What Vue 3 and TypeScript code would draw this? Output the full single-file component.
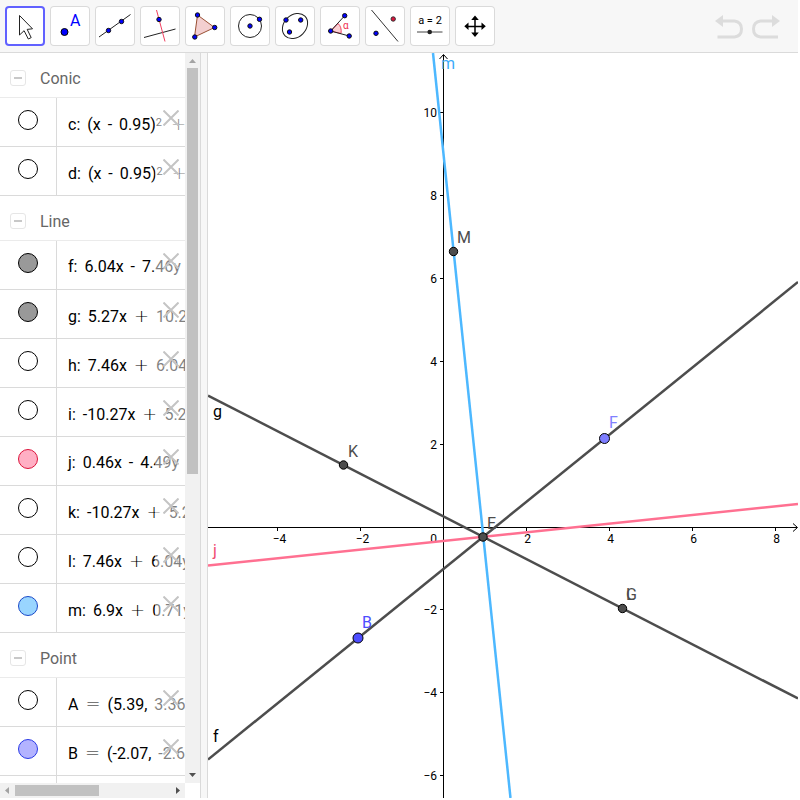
<script setup lang="ts">
import { computed, ref } from 'vue'

type Token = { text: string; op?: boolean; sup?: string }
interface Item {
  name: string
  tone: 'hidden' | 'grey' | 'pink' | 'blue' | 'violet'
  tokens: Token[]
}
interface Group {
  title: string
  items: Item[]
}

const t = (text: string, sup?: string): Token => ({ text, sup })
const op = (text: string): Token => ({ text, op: true })

const groups: Group[] = [
  {
    title: 'Conic',
    items: [
      { name: 'c', tone: 'hidden', tokens: [t('c:'), t('(x'), t('-'), t('0.95)', '2'), op('+')] },
      { name: 'd', tone: 'hidden', tokens: [t('d:'), t('(x'), t('-'), t('0.95)', '2'), op('+')] },
    ],
  },
  {
    title: 'Line',
    items: [
      { name: 'f', tone: 'grey', tokens: [t('f:'), t('6.04x'), t('-'), t('7.46y')] },
      { name: 'g', tone: 'grey', tokens: [t('g:'), t('5.27x'), op('+'), t('10.27y')] },
      { name: 'h', tone: 'hidden', tokens: [t('h:'), t('7.46x'), op('+'), t('6.04y')] },
      { name: 'i', tone: 'hidden', tokens: [t('i:'), t('-10.27x'), op('+'), t('5.27y')] },
      { name: 'j', tone: 'pink', tokens: [t('j:'), t('0.46x'), t('-'), t('4.49y')] },
      { name: 'k', tone: 'hidden', tokens: [t('k:'), t('-10.27x'), op('+'), t('5.27y')] },
      { name: 'l', tone: 'hidden', tokens: [t('l:'), t('7.46x'), op('+'), t('6.04y')] },
      { name: 'm', tone: 'blue', tokens: [t('m:'), t('6.9x'), op('+'), t('0.71y')] },
    ],
  },
  {
    title: 'Point',
    items: [
      { name: 'A', tone: 'hidden', tokens: [t('A'), op('='), t('(5.39,'), t('3.36)')] },
      { name: 'B', tone: 'violet', tokens: [t('B'), op('='), t('(-2.07,'), t('-2.67)')] },
      { name: 'C', tone: 'hidden', tokens: [] },
    ],
  },
]

const tools = ['Move', 'Point', 'Line', 'Perpendicular Line', 'Polygon', 'Circle', 'Ellipse', 'Angle', 'Reflect', 'Slider', 'Move View']
const active = ref('Move')

const origin = { x: 235.5, y: 473.9 }
const unit = 41.45
const xTicks = computed(() => [-4, -2, 2, 4, 6, 8].map((v) => ({ label: String(v).replace('-', '−'), at: Math.floor(origin.x + v * unit) + 0.5 })))
const yTicks = computed(() => [10, 8, 6, 4, 2, -2, -4, -6].map((v) => ({ label: String(v).replace('-', '−'), at: Math.floor(origin.y - v * unit) + 0.5 })))
</script>

<template>
  <div class="app">
    <header class="toolbar">
      <nav class="tools" aria-label="Tools">
        <button v-for="tool in tools" :key="tool" type="button" class="tool" :class="{ active: tool === active }" :aria-label="tool" @click="active = tool">
          <svg viewBox="0 0 40 40" class="icon">
            <path v-if="tool === 'Move'" d="M14.500 9.500V29l4.600-4.300 4.200 8.300 2.900-1.400-4-8.200 5.300-.6Z" fill="#fff" stroke="#222" />
            <g v-else-if="tool === 'Point'">
              <circle cx="14.500" cy="26" r="3.500" fill="#00f" stroke="#000" />
              <text x="20" y="20" class="point-letter">A</text>
            </g>
            <g v-else-if="tool === 'Line'">
              <path d="M4 31 35.500 8.500" stroke="#222" />
              <circle cx="13.500" cy="24.500" r="2.200" class="dot" /><circle cx="26.500" cy="15.500" r="2.200" class="dot" />
            </g>
            <g v-else-if="tool === 'Perpendicular Line'">
              <path d="m4 31.500 31.500-8.500" stroke="#222" />
              <path d="m16.500 4 8.500 31.500" stroke="#f04060" />
              <circle cx="19" cy="13.500" r="2.200" class="dot" />
            </g>
            <g v-else-if="tool === 'Polygon'">
              <path d="m12.500 9 17 12.500-20 9.500Z" fill="#f3cfd0" stroke="#995033" />
              <circle cx="12.500" cy="9" r="2.200" class="dot" /><circle cx="29.700" cy="21.500" r="2.200" class="dot" /><circle cx="9.800" cy="31" r="2.200" class="dot" />
            </g>
            <g v-else-if="tool === 'Circle'">
              <circle cx="20" cy="20" r="11.500" fill="none" stroke="#222" />
              <circle cx="20" cy="20" r="2.200" class="dot" /><circle cx="29.500" cy="13.300" r="2.200" class="dot" />
            </g>
            <g v-else-if="tool === 'Ellipse'">
              <ellipse cx="20" cy="20" rx="14" ry="11" transform="rotate(-45 20 20)" fill="none" stroke="#222" />
              <circle cx="11" cy="14" r="2.200" class="dot" /><circle cx="25.700" cy="14" r="2.200" class="dot" /><circle cx="14.500" cy="26" r="2.200" class="dot" />
            </g>
            <g v-else-if="tool === 'Angle'">
              <path d="M10.700 25 18 17.500q4 3.500 3 10Z" fill="#fbd0d4" stroke="#f04060" />
              <path d="M24.700 9.700 10.700 25l18.500 5" fill="none" stroke="#222" />
              <circle cx="24.700" cy="9.700" r="2.200" class="dot" /><circle cx="10.700" cy="25" r="2.200" class="dot" /><circle cx="29.200" cy="30" r="2.200" class="dot" />
              <text x="23" y="23" class="alpha">α</text>
            </g>
            <g v-else-if="tool === 'Reflect'">
              <path d="m6.500 4 26.500 31.500" stroke="#333" />
              <circle cx="28.200" cy="13" r="2.200" fill="#dc143c" stroke="#333" /><circle cx="11" cy="27.300" r="2.200" class="dot" />
            </g>
            <g v-else-if="tool === 'Slider'">
              <text x="20" y="18" class="slider-text">a = 2</text>
              <path d="M7 26h25.500" stroke="#444" /><circle cx="19.700" cy="26" r="2.300" fill="#222" />
            </g>
            <g v-else>
              <path d="M20 12v17M12 20.500h17" stroke="#000" stroke-width="1.500" />
              <path d="m20 9.500 3.800 4.500h-7.600Zm0 21.500 3.800-4.500h-7.600ZM9.300 20.300l4.200-3.800V24Zm21.500 0-4.300-3.800V24Z" />
            </g>
          </svg>
        </button>
      </nav>
      <div class="history">
        <button type="button" aria-label="Undo" disabled>
          <svg viewBox="0 0 30 26" class="history-icon"><path d="M7 8h12.500q7 1 7 8t-7 8H2.500" /><path class="head" d="M0 8 8 2v12Z" /></svg>
        </button>
        <button type="button" aria-label="Redo" disabled>
          <svg viewBox="0 0 30 26" class="history-icon"><path d="M21 8H8.500q-7 1-7 8t7 8H26" /><path class="head" d="m28 8-8-6v12Z" /></svg>
        </button>
      </div>
    </header>

    <main class="workspace">
      <aside class="algebra">
        <div class="list">
          <section v-for="group in groups" :key="group.title">
            <h2 class="group-title">
              <button type="button" class="collapse" :aria-label="'Collapse ' + group.title"></button>
              {{ group.title }}
            </h2>
            <div v-for="item in group.items" :key="item.name" class="row">
              <div class="marble-cell"><button type="button" class="marble" :class="item.tone" :aria-label="'Show ' + item.name"></button></div>
              <div class="formula">
                <span v-for="(token, i) in item.tokens" :key="i" :class="{ operator: token.op }">{{ token.text }}<sup v-if="token.sup">{{ token.sup }}</sup></span>
              </div>
              <button type="button" class="delete" :aria-label="'Delete ' + item.name">
                <svg viewBox="0 0 16 16"><path d="m.5.5 15 15m0-15-15 15" /></svg>
              </button>
            </div>
          </section>
        </div>
        <div class="v-scroll">
          <svg viewBox="0 0 15 15"><path d="M4 10h7L7.500 6Z" fill="#a3a3a3" /></svg>
          <div class="v-track"><div class="v-thumb"></div></div>
          <svg viewBox="0 0 15 15"><path d="M4 5h7L7.500 9Z" fill="#505050" /></svg>
        </div>
        <div class="h-scroll">
          <svg viewBox="0 0 15 15"><path d="M9 4v7L5 7.500Z" fill="#a3a3a3" /></svg>
          <div class="h-track"><div class="h-thumb"></div></div>
          <svg viewBox="0 0 15 15"><path d="M6 4v7l4-3.500Z" fill="#505050" /></svg>
        </div>
      </aside>
      <div class="splitter"></div>
      <section class="graphics" aria-label="Graphics view">
        <svg class="plot" viewBox="0 0 590 745" preserveAspectRatio="xMinYMin slice">
          <g class="axes">
            <path d="M0 474.500h589M235.500 745V2" />
            <path d="m231.500 6 4-4.500 4 4.500M585 470.500l4.500 4-4.500 4" fill="none" />
            <path v-for="x in xTicks" :key="x.label" :d="`M${x.at} 475v3`" />
            <path v-for="y in yTicks" :key="y.label" :d="`M232 ${y.at}h3`" />
          </g>
          <g class="numbers">
            <text v-for="x in xTicks" :key="x.label" :x="x.at + (x.label.length > 1 ? 2 : 1)" y="490" text-anchor="middle">{{ x.label }}</text>
            <text v-for="y in yTicks" :key="y.label" x="229" :y="y.at + 4" text-anchor="end">{{ y.label }}</text>
            <text x="229" y="490" text-anchor="end">0</text>
          </g>
          <g class="lines">
            <path class="dark" d="M0 706.500 590 229" />
            <path class="dark" d="m0 342.500 590 303" />
            <path class="rose" d="M0 512.500 590 451" />
            <path class="sky" d="m225 0 77.500 745" />
          </g>
          <g class="points">
            <circle cx="275" cy="484" r="4.200" /><circle cx="414.500" cy="555.500" r="4.200" />
            <circle cx="135.500" cy="412" r="4.200" /><circle cx="245.500" cy="198.500" r="4.200" />
            <circle cx="396.500" cy="385.500" r="5" fill="#7d7dff" /><circle cx="150" cy="585" r="5" fill="#4d4dff" />
          </g>
          <g class="labels">
            <text x="5" y="364" fill="#000">g</text>
            <text x="5" y="689" fill="#000">f</text>
            <text x="5" y="503" fill="#f04a70">j</text>
            <text x="233" y="16" fill="#3cabfa">m</text>
            <text x="249" y="190">M</text>
            <text x="140" y="404">K</text>
            <text x="279" y="476">E</text>
            <text x="418" y="547">L</text>
            <text x="418" y="547">G</text>
            <text x="401" y="375" fill="#8080ff">F</text>
            <text x="154" y="575" fill="#4d4dff">B</text>
          </g>
        </svg>
      </section>
    </main>
  </div>
</template>

<style>
body {
  margin: 0;
  background: #fff;
}
</style>

<style scoped>
.app {
  box-sizing: border-box;
  height: 100vh;
  padding: 0 2px 2px 0;
  display: flex;
  flex-direction: column;
  font-family: Roboto, "Noto Sans", sans-serif;
  color: #000;
  overflow: hidden;
}
button {
  padding: 0;
  margin: 0;
  background: none;
  border: 0;
  font: inherit;
}
svg {
  display: block;
}
.toolbar {
  flex: none;
  display: flex;
  justify-content: space-between;
  align-items: center;
  padding: 6px 16px 6px 5px;
  background: #f7f7f7;
  border-bottom: 1px solid #dadada;
}
.tools {
  display: flex;
  gap: 5px;
}
.tool {
  width: 40px;
  height: 40px;
  border-radius: 4px;
  background: #fff;
  box-shadow: inset 0 0 0 1px #dadada;
}
.tool.active {
  box-shadow: inset 0 0 0 2px #6161ff;
}
.icon {
  width: 40px;
  height: 40px;
}
.dot {
  fill: #00f;
  stroke: #111;
}
.point-letter {
  font-size: 16px;
  fill: #00f;
}
.alpha {
  font-size: 10px;
  fill: #f03050;
}
.slider-text {
  font-size: 11px;
  text-anchor: middle;
}
.history {
  display: flex;
  gap: 7px;
}
.history-icon {
  width: 30px;
  height: 26px;
  fill: none;
  stroke: #dcdcdc;
  stroke-width: 3;
}
.history-icon .head {
  fill: #dcdcdc;
  stroke: none;
}
.workspace {
  flex: 1;
  min-height: 0;
  display: flex;
}
.algebra {
  flex: none;
  width: 200px;
  display: grid;
  grid-template-columns: minmax(0, 1fr) 15px;
  grid-template-rows: minmax(0, 1fr) 15px;
}
.list {
  overflow: hidden;
}
.group-title {
  box-sizing: border-box;
  display: flex;
  align-items: center;
  gap: 14px;
  height: 45px;
  margin: 0;
  padding: 6px 0 0 10px;
  border-bottom: 1px solid #ebebeb;
  font-size: 16px;
  font-weight: 400;
  color: #666;
}
.collapse {
  box-sizing: border-box;
  width: 16px;
  height: 16px;
  display: grid;
  place-items: center;
  border: 1px solid #e6e6e6;
  border-radius: 3px;
}
.collapse::before {
  content: "";
  width: 8px;
  height: 2px;
  background: #c8c8c8;
}
.row {
  position: relative;
  display: flex;
  height: 48px;
  border-bottom: 1px solid #dadada;
  overflow: hidden;
}
.marble-cell {
  box-sizing: border-box;
  flex: none;
  width: 57px;
  display: grid;
  place-items: center;
  padding-bottom: 4px;
  border-right: 1px solid #dadada;
}
.marble {
  box-sizing: border-box;
  width: 20px;
  height: 20px;
  border: 1px solid #000;
  border-radius: 50%;
  background: #fff;
}
.marble.grey {
  background: #999;
}
.marble.pink {
  background: #ffafc4;
  border-color: #dc143c;
}
.marble.blue {
  background: #99d5ff;
  border-color: #1a49c8;
}
.marble.violet {
  background: #b3b3ff;
  border-color: #2a3ae6;
}
.formula {
  display: flex;
  align-items: baseline;
  gap: 7px;
  padding: 16px 0 0 11px;
  font-size: 16px;
  line-height: 20px;
  white-space: nowrap;
}
.operator {
  font-family: "DejaVu Sans", sans-serif;
  font-size: 18px;
  font-weight: 200;
}
sup {
  margin-right: 2px;
  font-size: 11px;
  line-height: 0;
  vertical-align: 4px;
}
.delete {
  position: absolute;
  top: 0;
  right: 0;
  width: 30px;
  height: 48px;
  padding-left: 8px;
  background: rgba(255, 255, 255, 0.5);
}
.delete svg {
  width: 16px;
  height: 16px;
  margin-bottom: 9px;
  stroke: #c4c4c4;
  stroke-width: 2;
}
.v-scroll {
  display: flex;
  flex-direction: column;
  background: #f1f1f1;
}
.h-scroll {
  display: flex;
  background: #f1f1f1;
}
.v-scroll svg,
.h-scroll svg {
  flex: none;
  width: 15px;
  height: 15px;
}
.v-track,
.h-track {
  flex: 1;
  padding: 0 2px;
}
.h-track {
  padding: 2px 0;
}
.v-thumb {
  height: 58%;
  background: #c1c1c1;
}
.h-thumb {
  width: 54%;
  height: 11px;
  background: #c1c1c1;
}
.splitter {
  flex: none;
  width: 6px;
  background: #f7f7f7;
  border: solid #dadada;
  border-width: 0 1px;
}
.graphics {
  flex: 1;
  min-width: 0;
  overflow: hidden;
}
.plot {
  width: 100%;
  height: 100%;
}
.axes {
  stroke: #000;
}
.numbers {
  font-size: 12px;
}
.lines {
  stroke-width: 2.5;
}
.dark {
  stroke: #4d4d4d;
}
.rose {
  stroke: #ff7091;
}
.sky {
  stroke: #4db8ff;
}
.points {
  fill: #4d4d4d;
  stroke: #000;
}
.labels {
  font-size: 16px;
  fill: #4d4d4d;
}
</style>
